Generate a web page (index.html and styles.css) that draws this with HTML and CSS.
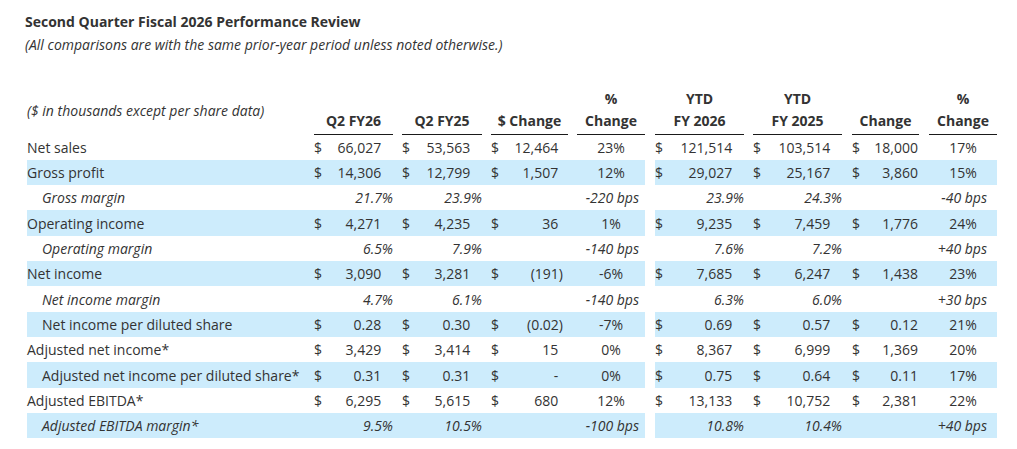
FILE: index.html
```html
<!DOCTYPE html>
<html lang="en">
<head>
<meta charset="utf-8">
<title>Second Quarter Fiscal 2026 Performance Review</title>
<link rel="stylesheet" href="styles.css">
</head>
<body>
<div class="report">
  <h1 class="title">Second Quarter Fiscal 2026 Performance Review</h1>
  <p class="note">(All comparisons are with the same prior-year period unless noted otherwise.)</p>
  <div class="tables">
    <table class="fin fin-q">
      <colgroup>
        <col class="c-label"><col class="c-q1"><col class="c-q2"><col class="c-q3"><col class="c-q4">
      </colgroup>
      <thead>
        <tr>
          <th class="lbl-h">($ in thousands except per share data)</th>
          <th><div class="hd">Q2 FY26</div></th>
          <th><div class="hd">Q2 FY25</div></th>
          <th><div class="hd">$ Change</div></th>
          <th><div class="hd">%<br>Change</div></th>
        </tr>
      </thead>
      <tbody>
        <tr><td class="lbl">Net sales</td><td class="m"><div class="mv"><span>$</span><span class="amt">66,027</span></div></td><td class="m"><div class="mv"><span>$</span><span class="amt">53,563</span></div></td><td class="m"><div class="mv"><span>$</span><span class="amt">12,464</span></div></td><td class="chg">23%</td></tr>
        <tr class="alt"><td class="lbl">Gross profit</td><td class="m"><div class="mv"><span>$</span><span class="amt">14,306</span></div></td><td class="m"><div class="mv"><span>$</span><span class="amt">12,799</span></div></td><td class="m"><div class="mv"><span>$</span><span class="amt">1,507</span></div></td><td class="chg">12%</td></tr>
        <tr><td class="lbl ind it">Gross margin</td><td class="pct">21.7%</td><td class="pct">23.9%</td><td></td><td class="bps">-220 bps</td></tr>
        <tr class="alt"><td class="lbl">Operating income</td><td class="m"><div class="mv"><span>$</span><span class="amt">4,271</span></div></td><td class="m"><div class="mv"><span>$</span><span class="amt">4,235</span></div></td><td class="m"><div class="mv"><span>$</span><span class="amt">36</span></div></td><td class="chg">1%</td></tr>
        <tr><td class="lbl ind it">Operating margin</td><td class="pct">6.5%</td><td class="pct">7.9%</td><td></td><td class="bps">-140 bps</td></tr>
        <tr class="alt"><td class="lbl">Net income</td><td class="m"><div class="mv"><span>$</span><span class="amt">3,090</span></div></td><td class="m"><div class="mv"><span>$</span><span class="amt">3,281</span></div></td><td class="m"><div class="mv"><span>$</span><span class="amt neg">(191)</span></div></td><td class="chg">-6%</td></tr>
        <tr><td class="lbl ind it">Net income margin</td><td class="pct">4.7%</td><td class="pct">6.1%</td><td></td><td class="bps">-140 bps</td></tr>
        <tr class="alt"><td class="lbl ind">Net income per diluted share</td><td class="m"><div class="mv"><span>$</span><span class="amt">0.28</span></div></td><td class="m"><div class="mv"><span>$</span><span class="amt">0.30</span></div></td><td class="m"><div class="mv"><span>$</span><span class="amt neg">(0.02)</span></div></td><td class="chg">-7%</td></tr>
        <tr><td class="lbl">Adjusted net income*</td><td class="m"><div class="mv"><span>$</span><span class="amt">3,429</span></div></td><td class="m"><div class="mv"><span>$</span><span class="amt">3,414</span></div></td><td class="m"><div class="mv"><span>$</span><span class="amt">15</span></div></td><td class="chg">0%</td></tr>
        <tr class="alt"><td class="lbl ind">Adjusted net income per diluted share*</td><td class="m"><div class="mv"><span>$</span><span class="amt">0.31</span></div></td><td class="m"><div class="mv"><span>$</span><span class="amt">0.31</span></div></td><td class="m"><div class="mv"><span>$</span><span class="amt">-</span></div></td><td class="chg">0%</td></tr>
        <tr><td class="lbl">Adjusted EBITDA*</td><td class="m"><div class="mv"><span>$</span><span class="amt">6,295</span></div></td><td class="m"><div class="mv"><span>$</span><span class="amt">5,615</span></div></td><td class="m"><div class="mv"><span>$</span><span class="amt">680</span></div></td><td class="chg">12%</td></tr>
        <tr class="alt"><td class="lbl ind it">Adjusted EBITDA margin*</td><td class="pct">9.5%</td><td class="pct">10.5%</td><td></td><td class="bps">-100 bps</td></tr>
      </tbody>
    </table>
    <table class="fin fin-ytd">
      <colgroup>
        <col class="c-y1"><col class="c-y2"><col class="c-y3"><col class="c-y4">
      </colgroup>
      <thead>
        <tr>
          <th><div class="hd">YTD<br>FY 2026</div></th>
          <th><div class="hd">YTD<br>FY 2025</div></th>
          <th><div class="hd">Change</div></th>
          <th><div class="hd">%<br>Change</div></th>
        </tr>
      </thead>
      <tbody>
        <tr><td class="m"><div class="mv"><span>$</span><span class="amt">121,514</span></div></td><td class="m"><div class="mv"><span>$</span><span class="amt">103,514</span></div></td><td class="m"><div class="mv"><span>$</span><span class="amt">18,000</span></div></td><td class="chg">17%</td></tr>
        <tr class="alt"><td class="m"><div class="mv"><span>$</span><span class="amt">29,027</span></div></td><td class="m"><div class="mv"><span>$</span><span class="amt">25,167</span></div></td><td class="m"><div class="mv"><span>$</span><span class="amt">3,860</span></div></td><td class="chg">15%</td></tr>
        <tr><td class="pct">23.9%</td><td class="pct">24.3%</td><td></td><td class="bps">-40 bps</td></tr>
        <tr class="alt"><td class="m"><div class="mv"><span>$</span><span class="amt">9,235</span></div></td><td class="m"><div class="mv"><span>$</span><span class="amt">7,459</span></div></td><td class="m"><div class="mv"><span>$</span><span class="amt">1,776</span></div></td><td class="chg">24%</td></tr>
        <tr><td class="pct">7.6%</td><td class="pct">7.2%</td><td></td><td class="bps">+40 bps</td></tr>
        <tr class="alt"><td class="m"><div class="mv"><span>$</span><span class="amt">7,685</span></div></td><td class="m"><div class="mv"><span>$</span><span class="amt">6,247</span></div></td><td class="m"><div class="mv"><span>$</span><span class="amt">1,438</span></div></td><td class="chg">23%</td></tr>
        <tr><td class="pct">6.3%</td><td class="pct">6.0%</td><td></td><td class="bps">+30 bps</td></tr>
        <tr class="alt"><td class="m"><div class="mv"><span>$</span><span class="amt">0.69</span></div></td><td class="m"><div class="mv"><span>$</span><span class="amt">0.57</span></div></td><td class="m"><div class="mv"><span>$</span><span class="amt">0.12</span></div></td><td class="chg">21%</td></tr>
        <tr><td class="m"><div class="mv"><span>$</span><span class="amt">8,367</span></div></td><td class="m"><div class="mv"><span>$</span><span class="amt">6,999</span></div></td><td class="m"><div class="mv"><span>$</span><span class="amt">1,369</span></div></td><td class="chg">20%</td></tr>
        <tr class="alt"><td class="m"><div class="mv"><span>$</span><span class="amt">0.75</span></div></td><td class="m"><div class="mv"><span>$</span><span class="amt">0.64</span></div></td><td class="m"><div class="mv"><span>$</span><span class="amt">0.11</span></div></td><td class="chg">17%</td></tr>
        <tr><td class="m"><div class="mv"><span>$</span><span class="amt">13,133</span></div></td><td class="m"><div class="mv"><span>$</span><span class="amt">10,752</span></div></td><td class="m"><div class="mv"><span>$</span><span class="amt">2,381</span></div></td><td class="chg">22%</td></tr>
        <tr class="alt"><td class="pct">10.8%</td><td class="pct">10.4%</td><td></td><td class="bps">+40 bps</td></tr>
      </tbody>
    </table>
  </div>
</div>
</body>
</html>
```
FILE: styles.css
```css
body {
  margin: 0;
  background: #ffffff;
  color: #333333;
  font-family: "Open Sans", "Liberation Sans", sans-serif;
  font-size: 14px;
}

.report {
  padding: 9.5px 0 0 25px;
}

.title {
  margin: 0;
  font-size: 14px;
  font-weight: 700;
  line-height: 23px;
}

.note {
  margin: 0;
  font-style: italic;
  line-height: 23px;
}

.tables {
  display: flex;
  gap: 10px;
  margin-top: 32px;
  padding-left: 2px;
}

.fin {
  border-collapse: collapse;
  border-spacing: 0;
  table-layout: fixed;
}

.fin-q { width: 618px; }
.fin-ytd { width: 342px; }

.c-label { width: 278px; }
.c-q1 { width: 88px; }
.c-q2 { width: 89px; }
.c-q3 { width: 86px; }
.c-q4 { width: 77px; }

.c-y1 { width: 89px; }
.c-y2 { width: 98px; }
.c-y3 { width: 77px; }
.c-y4 { width: 78px; }

.fin th {
  padding: 0;
  font-weight: 700;
  vertical-align: bottom;
}

.fin .hd {
  border-bottom: 1px solid #1a1a1a;
  text-align: center;
  line-height: 22px;
  padding-bottom: 2px;
}

.fin .lbl-h {
  text-align: left;
  vertical-align: middle;
  font-weight: 400;
  font-style: italic;
  padding-bottom: 2px;
}

.fin td {
  padding: 0;
  height: 25.33px;
  line-height: 19px;
  white-space: nowrap;
  vertical-align: middle;
}

.fin tr.alt td {
  background: #cdecfc;
}

/* column gaps (left padding) */
.fin-q th:nth-child(n+2),
.fin-q td:nth-child(n+2) { padding-left: 9px; }

.fin-ytd th:nth-child(2),
.fin-ytd td:nth-child(2) { padding-left: 9px; }

.fin-ytd th:nth-child(3),
.fin-ytd td:nth-child(3),
.fin-ytd th:nth-child(4),
.fin-ytd td:nth-child(4) { padding-left: 10px; }

/* right padding per column */
.fin-q td:nth-child(2),
.fin-q td:nth-child(3) { padding-right: 7px; }
.fin-q td:nth-child(4) { padding-right: 5px; }
.fin-q td:nth-child(5) { padding-right: 6px; }

.fin-ytd td:nth-child(1),
.fin-ytd td:nth-child(2) { padding-right: 7px; }
.fin-ytd td:nth-child(3) { padding-right: 0; }
.fin-ytd td:nth-child(4) { padding-right: 10px; }

/* labels */
.fin .lbl { padding-left: 0; }
.fin .ind { padding-left: 15px; }
.fin .it { font-style: italic; }

/* money cells */
.mv {
  display: flex;
  justify-content: space-between;
}

.amt { padding-right: 0.34em; }
.amt.neg { padding-right: 0; }
.fin-ytd td:nth-child(3) .amt { padding-right: 1px; }

/* percentages */
.fin td.pct {
  text-align: right;
  font-style: italic;
  padding-right: 0;
}

.fin td.chg {
  text-align: center;
  padding-right: 0;
}

.fin td.bps {
  text-align: right;
  font-style: italic;
}
```
